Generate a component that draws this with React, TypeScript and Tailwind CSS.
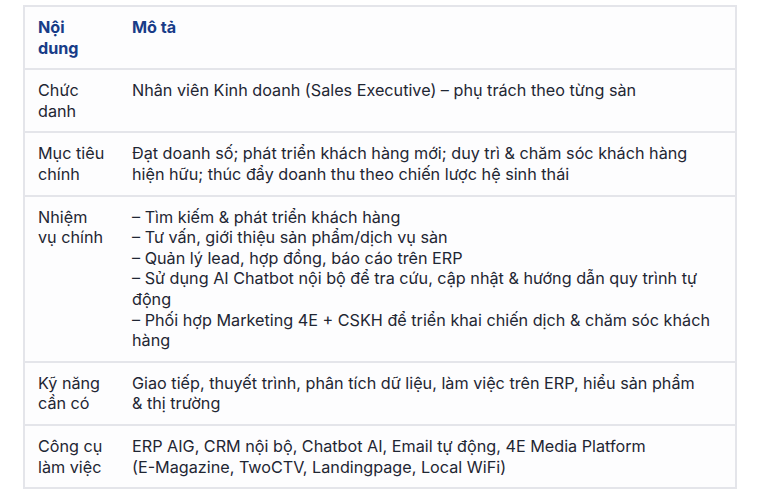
const rows: { label: string[]; desc: string[] }[] = [
  {
    label: ["Chức", "danh"],
    desc: ["Nhân viên Kinh doanh (Sales Executive) – phụ trách theo từng sàn"],
  },
  {
    label: ["Mục tiêu", "chính"],
    desc: [
      "Đạt doanh số; phát triển khách hàng mới; duy trì & chăm sóc khách hàng",
      "hiện hữu; thúc đẩy doanh thu theo chiến lược hệ sinh thái",
    ],
  },
  {
    label: ["Nhiệm", "vụ chính"],
    desc: [
      "– Tìm kiếm & phát triển khách hàng",
      "– Tư vấn, giới thiệu sản phẩm/dịch vụ sàn",
      "– Quản lý lead, hợp đồng, báo cáo trên ERP",
      "– Sử dụng AI Chatbot nội bộ để tra cứu, cập nhật & hướng dẫn quy trình tự",
      "động",
      "– Phối hợp Marketing 4E + CSKH để triển khai chiến dịch & chăm sóc khách",
      "hàng",
    ],
  },
  {
    label: ["Kỹ năng", "cần có"],
    desc: [
      "Giao tiếp, thuyết trình, phân tích dữ liệu, làm việc trên ERP, hiểu sản phẩm",
      "& thị trường",
    ],
  },
  {
    label: ["Công cụ", "làm việc"],
    desc: [
      "ERP AIG, CRM nội bộ, Chatbot AI, Email tự động, 4E Media Platform",
      "(E-Magazine, TwoCTV, Landingpage, Local WiFi)",
    ],
  },
]

const App = () => {
  return (
    <main
      className="min-h-[495px] bg-white pl-[23px] pt-[5px] text-[16.2px] leading-[20.6px] text-[#1f2633]"
      style={{ fontFamily: "Inter, 'Noto Sans', sans-serif" }}
    >
      <div className="w-[714px] border-2 border-[#e4e5ea] bg-[#fdfdfe]">
        {/* header */}
        <div className="flex border-b-2 border-[#e4e5ea]">
          <div className="w-[94px] shrink-0 py-[10px] pl-[13px] font-bold text-[#183c88]">
            <div>Nội</div>
            <div>dung</div>
          </div>
          <div className="flex-1 py-[10px] pl-[13px] font-bold text-[#183c88]">
            Mô tả
          </div>
        </div>

        {rows.map((row, i) => (
          <div
            key={row.label.join(" ")}
            className={
              i < rows.length - 1
                ? "flex border-b-2 border-[#e4e5ea]"
                : "flex"
            }
          >
            <div className="w-[94px] shrink-0 whitespace-nowrap py-[10px] pl-[13px]">
              {row.label.map((l) => (
                <div key={l}>{l}</div>
              ))}
            </div>
            <div className="flex-1 whitespace-nowrap py-[10px] pl-[13px]">
              {row.desc.map((line) => (
                <div key={line}>{line}</div>
              ))}
            </div>
          </div>
        ))}
      </div>
    </main>
  )
}

export default App
